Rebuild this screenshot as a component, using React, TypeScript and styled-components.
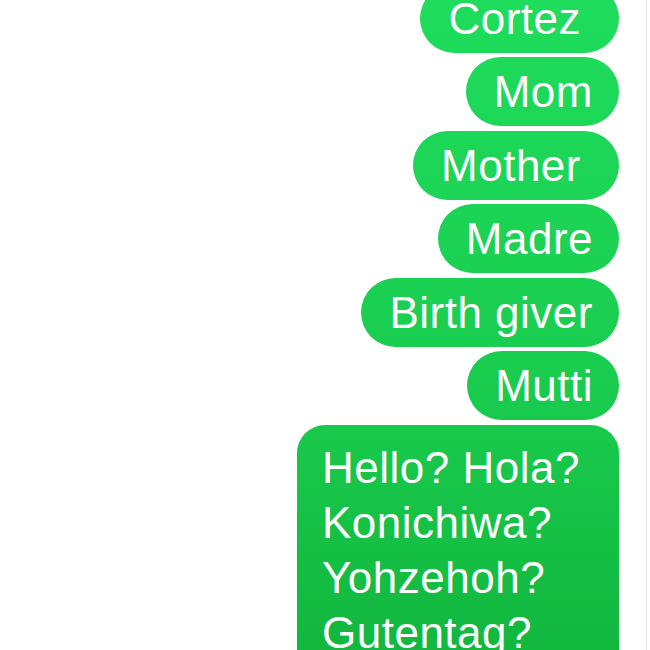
import styled, { createGlobalStyle } from "styled-components";

const GlobalStyle = createGlobalStyle`
  html, body {
    margin: 0;
    padding: 0;
    background: #ffffff;
  }
  body {
    font-family: "Liberation Sans", Arial, Helvetica, sans-serif;
    overflow: hidden;
  }
`;

const Screen = styled.div`
  width: 646px;
  height: 650px;
  overflow: hidden;
  background: #ffffff;
  border-right: 1px solid #e2e2e2;
`;

const Thread = styled.div`
  display: flex;
  flex-flow: column;
  align-items: flex-end;
  gap: 4.5px;
  margin-top: -16.5px;
  padding-right: 27px;
`;

const Bubble = styled.div<{ $trail?: boolean }>`
  font-size: 44px;
  letter-spacing: 0.5px;
  line-height: 55px;
  color: #ffffff;
  white-space: pre;
  padding: 7px ${(p) => (p.$trail ? "38px" : "26px")} 7px 28px;
  border-radius: 36px;
  background: linear-gradient(180deg, #1fdc5c 0%, #19cc4e 60%, #12b73e 100%);
  background-attachment: fixed;
`;

const LongBubble = styled(Bubble)`
  width: 322px;
  box-sizing: border-box;
  white-space: normal;
  padding: 15px 26px 20px 25px;
  border-radius: 28px;
`;

const messages = [
  { id: "cortez", text: "Cortez", trail: true },
  { id: "mom", text: "Mom" },
  { id: "mother", text: "Mother", trail: true },
  { id: "madre", text: "Madre" },
  { id: "birth", text: "Birth giver" },
  { id: "mutti", text: "Mutti" },
];

const greetings = ["Hello? Hola?", "Konichiwa?", "Yohzehoh?", "Gutentag?"];

export default function App() {
  return (
    <>
      <GlobalStyle />
      <Screen>
        <Thread>
          {messages.map((m) => (
            <Bubble key={m.id} $trail={m.trail}>
              {m.text}
            </Bubble>
          ))}
          <LongBubble>
            {greetings.map((g, idx) => (
              <div key={idx}>{g}</div>
            ))}
          </LongBubble>
        </Thread>
      </Screen>
    </>
  );
}
